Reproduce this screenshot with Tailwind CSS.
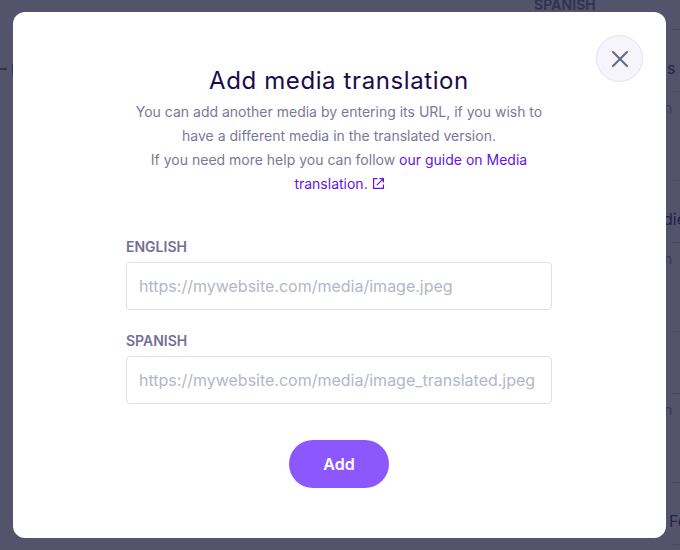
<!DOCTYPE html>
<html lang="en">
<head>
    <meta charset="utf-8">
    <meta name="viewport" content="width=device-width, initial-scale=1">
    <title>Add media translation</title>
    <script src="https://cdn.jsdelivr.net/npm/@tailwindcss/browser@4"></script>
</head>
<body class="h-screen overflow-hidden bg-[#53536b] font-['Inter',sans-serif]">
    <!-- page behind the modal -->
    <div class="flex h-full justify-between overflow-hidden text-[#25204c]" aria-hidden="true">
        <div class="pt-16">
            <div class="flex items-center gap-[5px]">
                <div class="h-0.5 w-[7px] bg-[#34304f]"></div>
                <div class="h-2.5 w-0.5 bg-[#34304f]"></div>
            </div>
        </div>
        <div class="flex">
            <div class="w-[130px] text-[14px] leading-[10px] font-bold text-[#343253]">SPANISH</div>
            <div class="w-4 pt-[29px] text-base">
                <div class="h-[151px]">
                    <div class="ml-2 h-[63px] border-y border-[#48485f]"><span class="-ml-[5px] block pt-[26px]">s</span></div>
                    <div class="pt-1.5 text-sm text-[#38365a]">n</div>
                </div>
                <div class="h-[151px]">
                    <div class="ml-2 h-[63px] border-y border-[#48485f]"><span class="-ml-[9px] block pt-[26px]">die</span></div>
                    <div class="pt-1.5 text-sm text-[#38365a]">n</div>
                </div>
                <div class="h-[151px]">
                    <div class="ml-2 h-[63px] border-y border-[#48485f]"></div>
                    <div class="pt-1.5 text-sm text-[#38365a]">n</div>
                </div>
                <div class="ml-2 h-[63px] border-y border-[#48485f]"><span class="-ml-[3px] block pt-[26px]">Fo</span></div>
            </div>
        </div>
    </div>

    <div class="fixed inset-0 pt-3 pr-[14px] pb-3 pl-[13px]">
        <div role="dialog" aria-labelledby="title" class="relative h-full rounded-xl bg-white pt-[53px] pr-[114px] pl-[113px]">
            <button type="button" aria-label="Close" class="absolute top-[23px] right-[23px] flex size-[47px] items-center justify-center rounded-full border border-[#e4e2ee] bg-[#f6f5fb]">
                <svg class="size-4" viewBox="0 0 16 16" fill="none" stroke="#63688c" stroke-width="2" stroke-linecap="round">
                    <path d="M1 1l14 14M15 1L1 15"/>
                </svg>
            </button>

            <div class="text-center">
                <h1 id="title" class="text-2xl leading-8 tracking-wide text-[#1b0b4b]">Add media translation</h1>
                <p class="mt-[3px] text-sm leading-6 text-[#7c7898]">
                    You can add another media by entering its URL, if you wish to<br>
                    have a different media in the translated version.<br>
                    If you need more help you can follow
                    <a href="#" class="text-[#6514e8]">our guide on Media<br>translation.
                        <svg class="ml-px inline size-[11px] align-baseline" viewBox="0 0 11 11" fill="none" stroke="currentColor" stroke-width="1.2">
                            <path d="M4.5 .6H.6v9.8h9.8V6.5M6.5 .6h3.9v3.9M10.2 .8L3.8 7.2"/>
                        </svg>
                    </a>
                </p>
            </div>

            <form class="mt-[41px]">
                <label for="english" class="block text-sm font-semibold text-[#746f94]">ENGLISH</label>
                <input id="english" type="text" placeholder="https://mywebsite.com/media/image.jpeg" class="mt-[5px] block h-12 w-full rounded border border-[#dfdfea] px-3 text-base text-[#1b0b4b] placeholder:text-[#b2b7c9]">
                <label for="spanish" class="mt-[21px] block text-sm font-semibold text-[#746f94]">SPANISH</label>
                <input id="spanish" type="text" placeholder="https://mywebsite.com/media/image_translated.jpeg" class="mt-[5px] block h-12 w-full rounded border border-[#dfdfea] px-3 text-base text-[#1b0b4b] placeholder:text-[#b2b7c9]">
                <button type="button" class="mx-auto mt-9 block h-12 w-[100px] rounded-full bg-[#8c57ff] text-base font-semibold text-white">Add</button>
            </form>
        </div>
    </div>
</body>
</html>
